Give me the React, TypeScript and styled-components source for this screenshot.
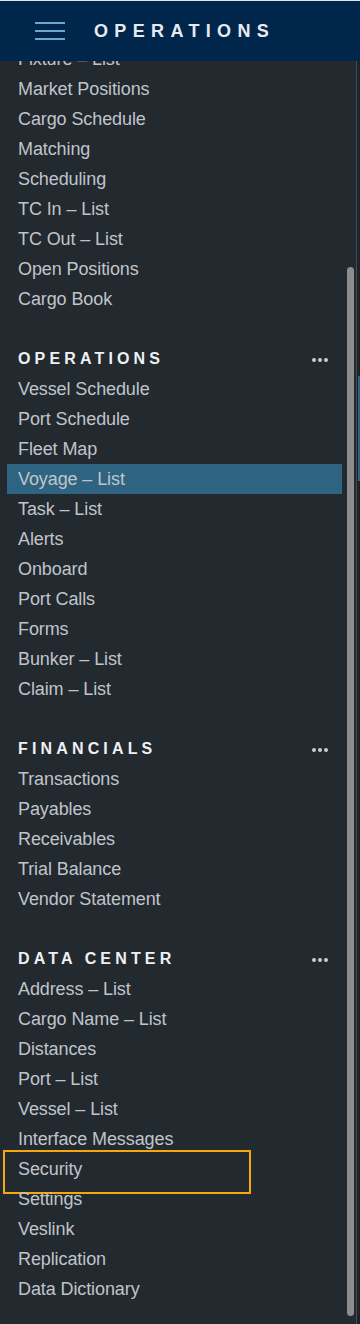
import React from 'react';
import styled, { createGlobalStyle } from 'styled-components';

const GlobalStyle = createGlobalStyle`
  html, body {
    margin: 0;
    padding: 0;
    background: #22292f;
  }
  * {
    box-sizing: border-box;
  }
`;

const Page = styled.div`
  width: 360px;
  height: 1324px;
  display: flex;
  flex-direction: column;
  background: #22292f;
  overflow: hidden;
  font-family: 'Liberation Sans', Arial, sans-serif;
`;

const TopBar = styled.header`
  height: 61px;
  flex-shrink: 0;
  display: flex;
  align-items: center;
  border-top: 1px solid #dfe3e8;
  background: #00264b;
  padding-left: 35px;
  gap: 29px;
  position: relative;
  z-index: 2;
`;

const Burger = styled.button`
  width: 30px;
  height: 20px;
  border: none;
  background: none;
  display: flex;
  flex-direction: column;
  justify-content: space-between;
  padding: 1px 0;
  cursor: pointer;
`;

const BurgerLine = styled.span`
  display: block;
  height: 2px;
  background: #6fa7d3;
`;

const AppTitle = styled.h1`
  margin: 0;
  font-size: 18px;
  font-weight: 700;
  letter-spacing: 6.35px;
  color: #e8eaf1;
  line-height: 20px;
`;

const Body = styled.div`
  flex: 1;
  display: flex;
  min-height: 0;
`;

const Sidebar = styled.nav`
  width: 344px;
  flex-shrink: 0;
  overflow: hidden;
`;

const Scroller = styled.div`
  margin-top: -17px;
  display: flex;
  flex-direction: column;
`;

const Section = styled.div<{ $first?: boolean }>`
  display: flex;
  flex-direction: column;
  margin-top: ${(p) => (p.$first ? '0' : '30px')};
`;

const SectionHead = styled.div`
  height: 30px;
  display: flex;
  align-items: center;
  justify-content: space-between;
  padding: 0 16px 0 18px;
`;

const SectionTitle = styled.span`
  font-size: 16px;
  font-weight: 700;
  letter-spacing: 4.15px;
  color: #eef0f3;
`;

const Dots = styled.span`
  display: flex;
  gap: 2px;
  margin-top: 1px;
`;

const Dot = styled.span`
  width: 4px;
  height: 4px;
  border-radius: 50%;
  background: #c9cdd4;
`;

const Item = styled.a<{ $active?: boolean; $focused?: boolean }>`
  position: relative;
  display: flex;
  align-items: center;
  height: 30px;
  margin: 0 2px 0 7px;
  padding-left: 11px;
  font-size: 18px;
  letter-spacing: -0.1px;
  color: #c0c4ca;
  text-decoration: none;
  background: ${(p) => (p.$active ? '#2e6481' : 'transparent')};

  ${(p) =>
    p.$focused &&
    `
    &::after {
      content: '';
      position: absolute;
      left: -4px;
      top: -4px;
      width: 244px;
      height: 40px;
      border: 2px solid #f4a80d;
    }
  `}
`;

const Track = styled.div`
  width: 12px;
  flex-shrink: 0;
  display: flex;
  justify-content: center;
  padding-top: 206px;
`;

const Thumb = styled.div`
  width: 7px;
  height: 1049px;
  border-radius: 4px;
  background: #8d8d8d;
`;

const Divider = styled.div`
  width: 1px;
  flex-shrink: 0;
  background: #454b51;
`;

const MainPeek = styled.div`
  flex: 1;
  background: #1d2329;
  padding-top: 315px;
`;

const PeekBlock = styled.div`
  height: 105px;
  margin-left: 1px;
  background: #2e6481;
`;

type NavSection = {
  title?: string;
  items: string[];
};

const sections: NavSection[] = [
  {
    items: [
      'Fixture – List',
      'Market Positions',
      'Cargo Schedule',
      'Matching',
      'Scheduling',
      'TC In – List',
      'TC Out – List',
      'Open Positions',
      'Cargo Book',
    ],
  },
  {
    title: 'OPERATIONS',
    items: [
      'Vessel Schedule',
      'Port Schedule',
      'Fleet Map',
      'Voyage – List',
      'Task – List',
      'Alerts',
      'Onboard',
      'Port Calls',
      'Forms',
      'Bunker – List',
      'Claim – List',
    ],
  },
  {
    title: 'FINANCIALS',
    items: ['Transactions', 'Payables', 'Receivables', 'Trial Balance', 'Vendor Statement'],
  },
  {
    title: 'DATA CENTER',
    items: [
      'Address – List',
      'Cargo Name – List',
      'Distances',
      'Port – List',
      'Vessel – List',
      'Interface Messages',
      'Security',
      'Settings',
      'Veslink',
      'Replication',
      'Data Dictionary',
    ],
  },
];

const ACTIVE = 'Voyage – List';
const FOCUSED = 'Security';

const App = () => {
  return (
    <>
      <GlobalStyle />
      <Page>
        <TopBar>
          <Burger aria-label="Menu">
            <BurgerLine />
            <BurgerLine />
            <BurgerLine />
          </Burger>
          <AppTitle>OPERATIONS</AppTitle>
        </TopBar>
        <Body>
          <Sidebar>
            <Scroller>
              {sections.map((section, i) => (
                <Section key={section.title || 'top'} $first={i === 0}>
                  {section.title && (
                    <SectionHead>
                      <SectionTitle>{section.title}</SectionTitle>
                      <Dots>
                        <Dot />
                        <Dot />
                        <Dot />
                      </Dots>
                    </SectionHead>
                  )}
                  {section.items.map((item) => (
                    <Item
                      key={item}
                      href="#"
                      $active={item === ACTIVE}
                      $focused={item === FOCUSED}
                    >
                      {item}
                    </Item>
                  ))}
                </Section>
              ))}
            </Scroller>
          </Sidebar>
          <Track>
            <Thumb />
          </Track>
          <Divider />
          <MainPeek>
            <PeekBlock />
          </MainPeek>
        </Body>
      </Page>
    </>
  );
};

export default App;
